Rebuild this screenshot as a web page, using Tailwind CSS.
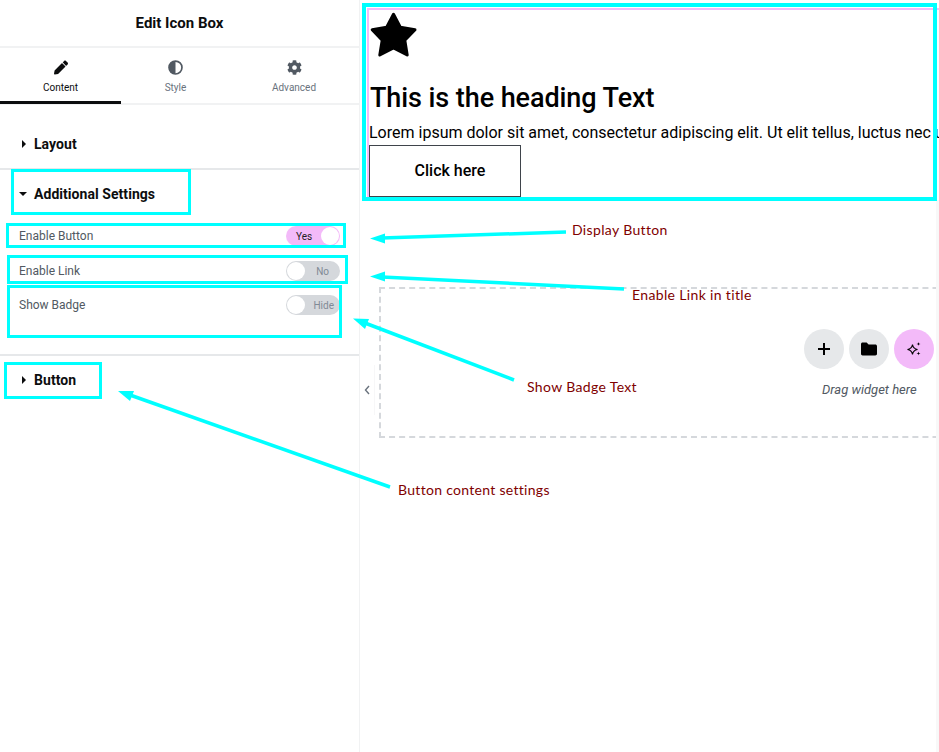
<!DOCTYPE html>
<html lang="en">
  <head>
    <meta charset="UTF-8" />
    <meta name="viewport" content="width=device-width, initial-scale=1.0" />
    <title>Edit Icon Box</title>
    <script src="https://cdn.jsdelivr.net/npm/@tailwindcss/browser@4"></script>
  </head>
  <body class="font-['Roboto',sans-serif] bg-white">
    <div class="relative flex w-[939px] h-[752px] overflow-hidden">
      <!-- Editor panel -->
      <aside class="w-[360px] shrink-0 border-r border-[#f1f2f3] flex flex-col">
        <div class="h-[46px] flex items-center justify-center text-[15px] font-bold text-[#0c0d0e]">Edit Icon Box</div>
        <div class="h-[59px] flex border-y-2 border-[#f1f2f3]">
          <div class="w-[121px] border-b-[3px] border-[#0c0d0e] -mb-[1px] flex flex-col items-center pt-[12px]">
            <svg class="w-[14px] h-[15px] text-[#0c0d0e]" viewBox="0 0 512 512" fill="currentColor"><path d="M497.9 142.1l-46.1 46.1c-4.700 4.700-12.300 4.700-17 0l-111-111c-4.700-4.700-4.700-12.300 0-17l46.100-46.100c18.700-18.700 49.100-18.700 67.900 0l60.100 60.100c18.800 18.700 18.800 49.100 0 67.900zM284.200 99.800L21.600 362.400.4 483.900c-2.900 16.400 11.400 30.600 27.800 27.800l121.500-21.300 262.600-262.600c4.700-4.700 4.700-12.300 0-17l-111-111c-4.800-4.700-12.400-4.700-17.100 0z"/></svg>
            <span class="text-[10px] leading-[12px] mt-[7px] text-[#0c0d0e]">Content</span>
          </div>
          <div class="w-[109px] flex flex-col items-center pt-[12px]">
            <svg class="w-[15px] h-[15px] text-[#515962]" viewBox="0 0 16 16"><circle cx="8" cy="8" r="6.900" fill="none" stroke="currentColor" stroke-width="1.800"/><path d="M8 1a7 7 0 0 0 0 14z" fill="currentColor"/></svg>
            <span class="text-[10px] leading-[12px] mt-[7px] text-[#69727d]">Style</span>
          </div>
          <div class="w-[128px] flex flex-col items-center pt-[12px]">
            <svg class="w-[15px] h-[15px] text-[#515962]" viewBox="0 0 512 512" fill="currentColor"><path d="M487.400 315.700l-42.600-24.600c4.300-23.200 4.300-47 0-70.200l42.600-24.600c4.900-2.800 7.100-8.600 5.500-14-11.100-35.600-30-67.800-54.700-94.600-3.800-4.100-10-5.100-14.800-2.300L380.800 110c-17.900-15.400-38.500-27.300-60.800-35.100V25.800c0-5.600-3.900-10.500-9.400-11.700-36.700-8.200-74.300-7.800-109.200 0-5.500 1.200-9.400 6.100-9.400 11.700V75c-22.200 7.900-42.800 19.800-60.800 35.100L88.700 85.500c-4.900-2.800-11-1.900-14.800 2.300-24.700 26.700-43.600 58.900-54.700 94.600-1.700 5.400.6 11.200 5.500 14L67.300 221c-4.300 23.200-4.300 47 0 70.200l-42.600 24.600c-4.900 2.800-7.100 8.600-5.500 14 11.100 35.600 30 67.800 54.700 94.600 3.800 4.100 10 5.100 14.800 2.300l42.600-24.600c17.900 15.400 38.500 27.300 60.800 35.100v49.200c0 5.600 3.900 10.500 9.400 11.700 36.700 8.200 74.300 7.800 109.200 0 5.500-1.200 9.400-6.100 9.400-11.700v-49.200c22.200-7.900 42.800-19.800 60.800-35.100l42.600 24.600c4.900 2.800 11 1.900 14.800-2.300 24.700-26.700 43.600-58.900 54.700-94.600 1.500-5.500-.7-11.300-5.600-14.100zM256 336c-44.100 0-80-35.900-80-80s35.900-80 80-80 80 35.900 80 80-35.900 80-80 80z"/></svg>
            <span class="text-[10px] leading-[12px] mt-[7px] text-[#69727d]">Advanced</span>
          </div>
        </div>

        <!-- Layout section -->
        <div class="h-[65px] border-b-2 border-[#e6e8ea] flex items-end pb-[15px] pl-[22px] gap-[8px]">
          <span class="w-0 h-0 mb-[5px] border-y-[4px] border-y-transparent border-l-[4px] border-l-[#0c0d0e]"></span>
          <span class="text-sm leading-[18px] font-bold tracking-[0.05px] text-[#0c0d0e]">Layout</span>
        </div>

        <!-- Additional Settings section -->
        <div class="h-[186px] border-b-2 border-[#e6e8ea] pl-[19px] pr-[19px]">
          <div class="flex items-center gap-[7px] h-[48px]">
            <span class="w-0 h-0 border-x-[4px] border-x-transparent border-t-[4px] border-t-[#0c0d0e]"></span>
            <span class="text-sm leading-[18px] font-bold tracking-[0.05px] text-[#0c0d0e]">Additional Settings</span>
          </div>
          <div class="flex flex-col">
            <div class="flex items-center justify-between h-[20px] mt-[8px]">
              <span class="text-xs text-[#515962]">Enable Button</span>
              <div class="w-[54px] h-[20px] rounded-full bg-[#f3baf9] flex items-center justify-between pl-[10px] pr-[1px]">
                <span class="text-[10px] text-[#1f2124]">Yes</span>
                <span class="w-[18px] h-[18px] rounded-full bg-white"></span>
              </div>
            </div>
            <div class="flex items-center justify-between h-[20px] mt-[15px]">
              <span class="text-xs text-[#515962]">Enable Link</span>
              <div class="w-[54px] h-[20px] rounded-full bg-[#d5d8dc] flex items-center justify-between pl-[1px] pr-[11px]">
                <span class="w-[18px] h-[18px] rounded-full bg-white"></span>
                <span class="text-[10px] text-[#818a96]">No</span>
              </div>
            </div>
            <div class="flex items-center justify-between h-[20px] mt-[14px]">
              <span class="text-xs text-[#515962]">Show Badge</span>
              <div class="w-[54px] h-[20px] rounded-full bg-[#d5d8dc] flex items-center justify-between pl-[1px] pr-[6px]">
                <span class="w-[18px] h-[18px] rounded-full bg-white"></span>
                <span class="text-[10px] text-[#818a96]">Hide</span>
              </div>
            </div>
          </div>
        </div>

        <!-- Button section -->
        <div class="flex items-center h-[48px] pl-[22px] gap-[8px]">
          <span class="w-0 h-0 border-y-[4px] border-y-transparent border-l-[4px] border-l-[#0c0d0e]"></span>
          <span class="text-sm leading-[18px] font-bold tracking-[0.05px] text-[#0c0d0e]">Button</span>
        </div>
      </aside>

      <!-- Canvas -->
      <main class="relative flex-1 min-w-0 overflow-hidden">
        <div class="ml-[7px] mt-[8px] w-[600px] h-[190px] border-t-2 border-l-2 border-[#f3baf9] pl-[1px] pt-[2px]">
          <svg class="w-[47px] h-[47px]" viewBox="0 0 47 47" fill="#000" stroke="#000" stroke-width="3" stroke-linejoin="round"><path d="M23.500 2.300L30.300 15.300 45 17.800 34.800 28.300 37.200 43 23.500 36 9.800 43 12.200 28.300 2.200 17.800 16.700 15.300z"/></svg>
          <h2 class="mt-[23px] text-[27px] leading-[32px] tracking-[-0.08px] font-medium text-black whitespace-nowrap">This is the heading Text</h2>
          <p class="mt-[7px] text-base leading-[24px] text-black whitespace-nowrap -ml-[1px]">Lorem ipsum dolor sit amet, consectetur adipiscing elit. Ut elit tellus, luctus nec ullamcorper mattis</p>
          <div class="-ml-[1px] w-[152px] h-[52px] border border-[#3f444b] flex items-center justify-center pl-[10px] text-base font-medium text-black">Click here</div>
        </div>

        <!-- Drop zone -->
        <div class="absolute left-[19px] top-[287px] w-[640px] h-[151px] border-2 border-dashed border-[#d5d8dc]">
          <div class="absolute left-[423px] top-[40px] flex gap-[5px]">
            <span class="w-[40px] h-[40px] rounded-full bg-[#e6e8ea] flex items-center justify-center">
              <svg class="w-[14px] h-[14px]" viewBox="0 0 14 14"><path d="M7 1v12M1 7h12" stroke="#000" stroke-width="2"/></svg>
            </span>
            <span class="w-[40px] h-[40px] rounded-full bg-[#e6e8ea] flex items-center justify-center">
              <svg class="w-[16px] h-[14px]" viewBox="0 0 16 14" fill="#000"><path d="M0 2.200C0 1.300.7.600 1.600.600h4l2 2h6.700c.9 0 1.700.7 1.700 1.600v7.600c0 .9-.8 1.600-1.700 1.600H1.600C.7 13.400 0 12.700 0 11.800z"/></svg>
            </span>
            <span class="w-[40px] h-[40px] rounded-full bg-[#f3baf9] flex items-center justify-center">
              <svg class="w-[16px] h-[16px]" viewBox="0 0 16 16"><path d="M6.500 3.500C7 6.700 8.300 8 11.500 8.500 8.300 9 7 10.300 6.500 13.500 6 10.300 4.700 9 1.500 8.500 4.700 8 6 6.700 6.500 3.500z" fill="none" stroke="#000" stroke-width="1.100"/><path d="M12.500 1c.2 1.400.6 1.800 2 2-1.400.2-1.800.6-2 2-.2-1.400-.6-1.800-2-2 1.400-.2 1.800-.6 2-2zM12.500 10.500c.2 1.400.6 1.800 2 2-1.400.2-1.800.6-2 2-.2-1.400-.6-1.800-2-2 1.400-.2 1.800-.6 2-2z" fill="#000"/></svg>
            </span>
          </div>
          <span class="absolute left-[441px] top-[93px] text-[13px] leading-[16px] italic text-[#515962] whitespace-nowrap">Drag widget here</span>
        </div>

        <!-- Panel collapse tab -->
        <div class="absolute left-0 top-[365px] w-[15px] h-[50px] bg-white border-r border-[#f7f7f8] flex items-center justify-center">
          <svg class="w-[6px] h-[10px]" viewBox="0 0 6 10"><path d="M5 1L1.500 5 5 9" fill="none" stroke="#69727d" stroke-width="1.400"/></svg>
        </div>

        <!-- Scrollbar strip -->
        <div class="absolute right-0 top-[200px] bottom-0 w-[3px] bg-[#f8f8f8]"></div>
      </main>

      <!-- Annotation boxes -->
      <div class="absolute left-[362px] top-[3px] w-[575px] h-[198px] border-4 border-[#00ffff]"></div>
      <div class="absolute left-[11px] top-[169px] w-[180px] h-[46px] border-[3px] border-[#00ffff]"></div>
      <div class="absolute left-[6px] top-[223px] w-[340px] h-[25px] border-[3px] border-[#00ffff]"></div>
      <div class="absolute left-[7px] top-[255px] w-[341px] h-[29px] border-[3px] border-[#00ffff]"></div>
      <div class="absolute left-[7px] top-[285px] w-[335px] h-[53px] border-[3px] border-[#00ffff]"></div>
      <div class="absolute left-[4px] top-[362px] w-[98px] h-[37px] border-[3px] border-[#00ffff]"></div>

      <!-- Annotation arrows -->
      <svg class="absolute left-0 top-0 w-[939px] h-[752px] pointer-events-none" viewBox="0 0 939 752" fill="#00ffff" stroke="#00ffff">
        <path d="M566 232L382 238" stroke-width="3.500" fill="none"/>
        <path d="M370 238.500L385 233.500 385 243.500z" stroke="none"/>
        <path d="M624 289L382 277" stroke-width="3.500" fill="none"/>
        <path d="M370 276.500L385 271.500 385 281.500z" stroke="none"/>
        <path d="M514 380L365 323" stroke-width="3.500" fill="none"/>
        <path d="M353 318.500L369 319 365 329z" stroke="none"/>
        <path d="M390 487L130 395" stroke-width="3.500" fill="none"/>
        <path d="M118 391L134 391 130 401z" stroke="none"/>
      </svg>

      <!-- Annotation labels -->
      <span class="absolute left-[572px] top-[221px] text-sm leading-[18px] tracking-[0.35px] text-[#800000] font-['Lato',sans-serif]">Display Button</span>
      <span class="absolute left-[632px] top-[286px] text-sm leading-[18px] tracking-[0.35px] text-[#800000] font-['Lato',sans-serif]">Enable Link in title</span>
      <span class="absolute left-[527px] top-[378px] text-sm leading-[18px] tracking-[0.35px] text-[#800000] font-['Lato',sans-serif]">Show Badge Text</span>
      <span class="absolute left-[398px] top-[481px] text-sm leading-[18px] tracking-[0.3px] text-[#800000] font-['Lato',sans-serif]">Button content settings</span>
    </div>
  </body>
</html>
